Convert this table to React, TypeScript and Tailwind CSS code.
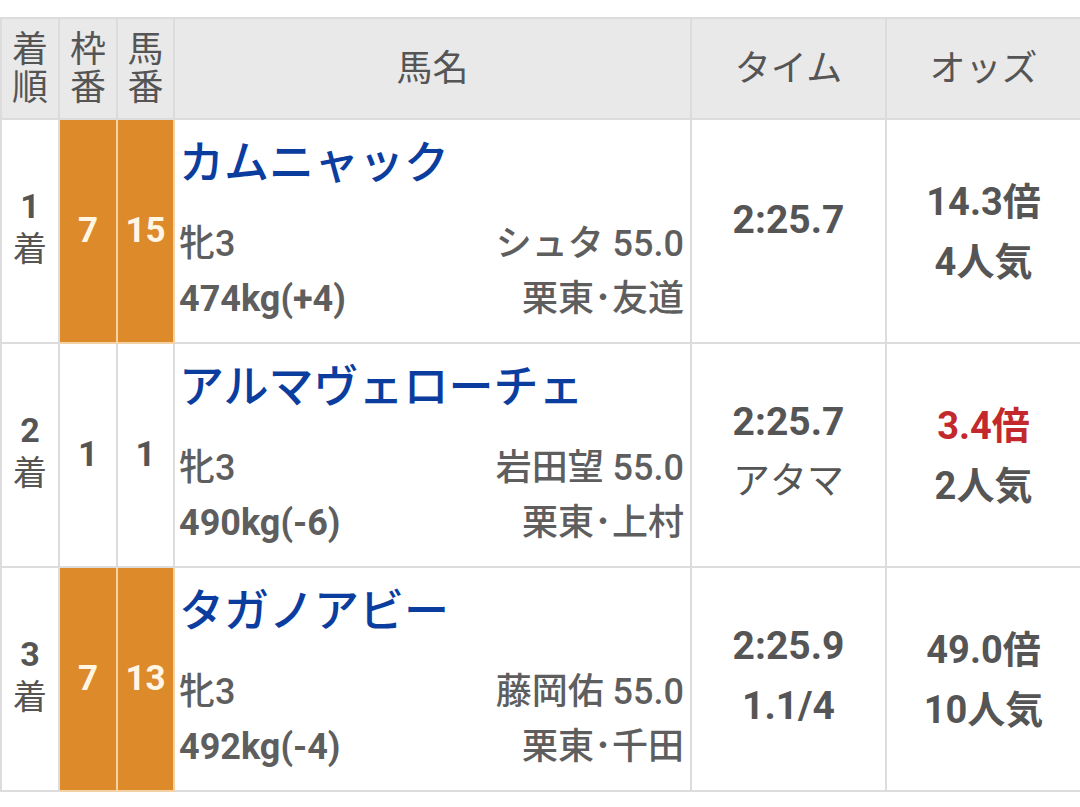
import React from "react";

type Row = {
  rank: number;
  waku: number;
  uma: number;
  name: string;
  sex: string;
  weight: string;
  jockey: string;
  trainer: string;
  time: string;
  margin: string;
  odds: string;
  pop: string;
  fav?: boolean;
  colored: boolean;
};

const rows: Row[] = [
  {
    rank: 1,
    waku: 7,
    uma: 15,
    name: "カムニャック",
    sex: "牝3",
    weight: "474kg(+4)",
    jockey: "シュタ 55.0",
    trainer: "栗東･友道",
    time: "2:25.7",
    margin: "",
    odds: "14.3倍",
    pop: "4人気",
    colored: true,
  },
  {
    rank: 2,
    waku: 1,
    uma: 1,
    name: "アルマヴェローチェ",
    sex: "牝3",
    weight: "490kg(-6)",
    jockey: "岩田望 55.0",
    trainer: "栗東･上村",
    time: "2:25.7",
    margin: "アタマ",
    odds: "3.4倍",
    pop: "2人気",
    fav: true,
    colored: false,
  },
  {
    rank: 3,
    waku: 7,
    uma: 13,
    name: "タガノアビー",
    sex: "牝3",
    weight: "492kg(-4)",
    jockey: "藤岡佑 55.0",
    trainer: "栗東･千田",
    time: "2:25.9",
    margin: "1.1/4",
    odds: "49.0倍",
    pop: "10人気",
    colored: true,
  },
];

const font = "font-['Roboto','Noto_Sans_CJK_JP',sans-serif]";

export default function App() {
  return (
    <div className={`bg-white w-[1080px] h-[807px] pt-[17px] ${font}`}>
      <table className="w-[1080px] table-fixed border-collapse">
        <colgroup>
          <col className="w-[58px]" />
          <col className="w-[58px]" />
          <col className="w-[57px]" />
          <col className="w-[517px]" />
          <col className="w-[195px]" />
          <col className="w-[195px]" />
        </colgroup>
        <thead>
          <tr className="h-[101px] bg-[#e9e9e9] text-[#555] text-[36px]">
            <th className="border-2 border-[#dcdcdc] font-normal leading-[38px]">
              着<br />順
            </th>
            <th className="border-2 border-[#dcdcdc] font-normal leading-[38px]">
              枠<br />番
            </th>
            <th className="border-2 border-[#dcdcdc] font-normal leading-[38px]">
              馬<br />番
            </th>
            <th className="border-2 border-[#dcdcdc] font-normal">馬名</th>
            <th className="border-2 border-[#dcdcdc] font-normal">タイム</th>
            <th className="border-2 border-[#dcdcdc] font-normal">オッズ</th>
          </tr>
        </thead>
        <tbody>
          {rows.map((r) => (
            <tr key={r.rank} className="h-[224px]">
              <td className="border-2 border-[#dcdcdc] text-center text-[#555] text-[34px] font-bold leading-[43px] pb-[6px]">
                {r.rank}
                <br />
                <span className="font-normal">着</span>
              </td>
              <td
                className={
                  r.colored
                    ? "border-2 border-[#f3d2a6] bg-[#dd8a2a] text-center text-[#fff6e6] text-[35px] font-bold"
                    : "border-2 border-[#dcdcdc] text-center text-[#555] text-[35px] font-bold"
                }
              >
                {r.waku}
              </td>
              <td
                className={
                  r.colored
                    ? "border-2 border-[#f3d2a6] bg-[#dd8a2a] text-center text-[#fff6e6] text-[35px] font-bold"
                    : "border-2 border-[#dcdcdc] text-center text-[#555] text-[35px] font-bold"
                }
              >
                {r.uma}
              </td>
              <td className="border-2 border-[#dcdcdc] align-top pl-[4px] pr-[6px] pt-[14px]">
                <div className="text-[#0b3d9f] text-[45px] font-medium leading-[60px] whitespace-nowrap">
                  {r.name}
                </div>
                <div className="mt-[23px] flex justify-between text-[#5e5e5e] text-[36px] leading-[55px]">
                  <span className="font-medium">{r.sex}</span>
                  <span className="font-medium">{r.jockey}</span>
                </div>
                <div className="flex justify-between text-[#5e5e5e] text-[36px] leading-[55px]">
                  <span className="font-bold">{r.weight}</span>
                  <span className="font-medium">{r.trainer}</span>
                </div>
              </td>
              <td className="border-2 border-[#dcdcdc] align-top text-center text-[#555] text-[39px] font-bold leading-[60px]">
                {r.margin ? (
                  <div className="pt-[48px]">
                    <div>{r.time}</div>
                    <div className={/[0-9]/.test(r.margin) ? "" : "font-normal text-[37px]"}>{r.margin}</div>
                  </div>
                ) : (
                  <div className="pt-[70px]">
                    <div>{r.time}</div>
                  </div>
                )}
              </td>
              <td className="border-2 border-[#dcdcdc] align-top text-center text-[38px] font-bold leading-[60px]">
                <div className="pt-[52px]">
                  <div className={r.fav ? "text-[#c3292c]" : "text-[#555]"}>{r.odds}</div>
                  <div className="text-[#555]">{r.pop}</div>
                </div>
              </td>
            </tr>
          ))}
        </tbody>
      </table>
    </div>
  );
}
